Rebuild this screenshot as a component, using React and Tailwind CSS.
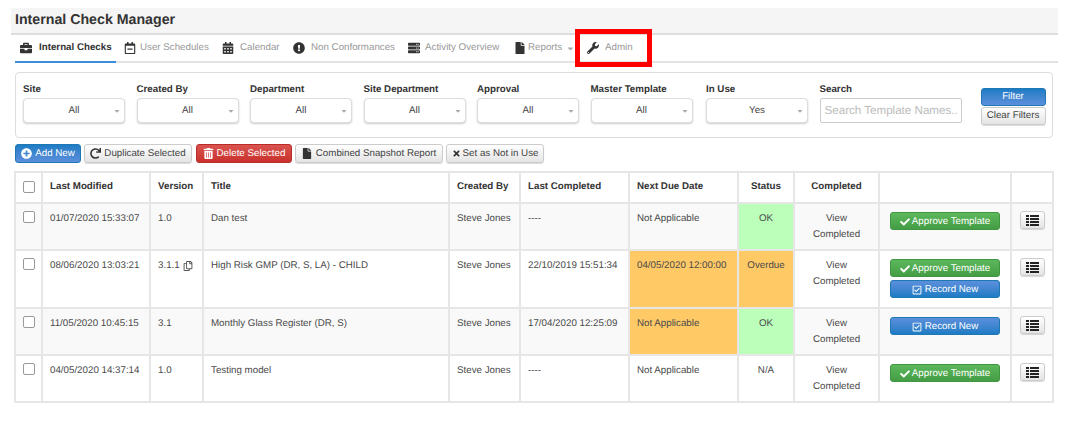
import React from "react";
import { FaBriefcase, FaRegCalendarMinus, FaCalendarAlt, FaExclamationCircle, FaServer, FaFile, FaWrench, FaPlusCircle, FaRedo, FaTrashAlt, FaTimes, FaRegCopy, FaCheck, FaRegCheckSquare, FaCaretDown } from "react-icons/fa";

const Tab = ({ icon: I, label, active, caret, w, gap }) => (
  <div className={`flex items-center h-full pl-[5px] ${w} ${active ? "text-[#333] font-bold" : "text-[#999]"}`}>
    <I className={`text-[#333] w-[12px] h-[12px] shrink-0 ${gap}`} />
    <span className="whitespace-nowrap">{label}</span>
    {caret && <FaCaretDown className="ml-[4px] w-[9px] h-[9px] text-[#aaa]" />}
  </div>
);

const Select = ({ label, value, cls }) => (
  <div className={`w-[102px] mr-[11.5px] shrink-0 ${cls || ""}`}>
    <div className="font-bold text-[#333] leading-[13px] pt-[1px] mb-[2px]">{label}</div>
    <div className="relative h-[25px] rounded-[4px] border border-[#ddd] bg-white shadow-[0_1px_2px_rgba(0,0,0,0.2)] flex items-center justify-center text-[#444]">
      {value}
      <FaCaretDown className="absolute right-[3px] top-[8px] w-[8px] h-[8px] text-[#aaa]" />
    </div>
  </div>
);

const grey = "h-[19px] rounded-[3px] border border-[#ccc] bg-gradient-to-b from-white to-[#e4e4e4] text-[#444] flex items-center justify-center whitespace-nowrap shadow-[0_1px_1px_rgba(0,0,0,0.15)]";

const Approve = () => (
  <div className="h-[18px] w-[110px] rounded-[3px] border border-[#419641] bg-gradient-to-b from-[#5cb85c] to-[#449d44] text-white flex items-center justify-center whitespace-nowrap pt-[1px]">
    <FaCheck className="w-[10px] h-[10px] mr-[2px]" />Approve Template
  </div>
);
const Record = () => (
  <div className="h-[18px] w-[110px] rounded-[3px] border border-[#1f78b4] bg-gradient-to-b from-[#5b8fdc] to-[#1a7cc4] text-white flex items-center justify-center whitespace-nowrap pt-[1px]">
    <FaRegCheckSquare className="w-[10px] h-[10px] mr-[3px]" />Record New
  </div>
);

const ListIcon = () => (
  <svg width="13" height="11" viewBox="0 0 13 11" className="text-[#222]" fill="currentColor">
    <rect x="0" y="0" width="3" height="2" />
    <rect x="4" y="0" width="9" height="2" />
    <rect x="0" y="3" width="3" height="2" />
    <rect x="4" y="3" width="9" height="2" />
    <rect x="0" y="6" width="3" height="2" />
    <rect x="4" y="6" width="9" height="2" />
    <rect x="0" y="9" width="3" height="2" />
    <rect x="4" y="9" width="9" height="2" />
  </svg>
);

const td = "border-2 border-[#e6e6e6] align-top px-[7px] pt-[8px] text-[#4a4a4a]";
const th = "border-2 border-[#e6e6e6] px-[7px] pb-[1px] font-bold text-[#333] text-left align-middle";

const Row = ({ bg, h, mod, ver, copy, title, last, due, dueCls, status, statusCls, children }) => (
  <tr className={bg} style={{ height: h }}>
    <td className={`${td} !pl-[7px] !pt-[7px]`}><div className="w-[12px] h-[12px] border border-[#999] rounded-[2px] bg-white" /></td>
    <td className={td}>{mod}</td>
    <td className={td}>
      <span className="flex items-center">{ver}{copy && <FaRegCopy className="ml-[3px] w-[10px] h-[10px] text-[#555]" />}</span>
    </td>
    <td className={td}>{title}</td>
    <td className={td}>Steve Jones</td>
    <td className={td}>{last}</td>
    <td className={`${td} ${dueCls || ""}`}>{due}</td>
    <td className={`${td} text-center ${statusCls || ""}`}>{status}</td>
    <td className={`${td} text-center leading-[16px] !pt-[7px]`}>View<br />Completed</td>
    <td className={`${td} !pt-[8px] !pl-[10px]`}><div className="flex flex-col gap-[3px]">{children}</div></td>
    <td className={`${td} !pt-[7px] !pl-[8px]`}>
      <div className="w-[25px] h-[18px] rounded-[3px] border border-[#ccc] bg-gradient-to-b from-white to-[#e4e4e4] flex items-center justify-center shadow-[0_1px_1px_rgba(0,0,0,0.15)]">
        <ListIcon />
      </div>
    </td>
  </tr>
);

export default function App() {
  return (
    <div className="relative w-[1069px] h-[430px] bg-white overflow-hidden text-[9.75px] leading-[14px] pt-[8px] [text-rendering:geometricPrecision]" style={{ fontFamily: '"Liberation Sans", Arial, sans-serif' }}>
      <div className="ml-[11px] w-[1047px] h-[27px] bg-[#f5f5f5] border-b-2 border-[#ddd] pl-[4px] flex items-center pb-[1px] text-[14.2px] font-bold text-[#333]">
        Internal Check Manager
      </div>
      <div className="relative ml-[15px] w-[1043px] h-[28px] flex items-center border-b-2 border-[#e3e3e3]">
        <div className="absolute left-0 -bottom-[2px] w-[101px] h-[2px] bg-[#3b8edb]" />
        <Tab icon={FaBriefcase} label="Internal Checks" active w="w-[104px]" gap="mr-[7px]" />
        <Tab icon={FaRegCalendarMinus} label="User Schedules" w="w-[98px]" gap="mr-[4px]" />
        <Tab icon={FaCalendarAlt} label="Calendar" w="w-[71px]" gap="mr-[6px]" />
        <Tab icon={FaExclamationCircle} label="Non Conformances" w="w-[115px]" gap="mr-[6px]" />
        <Tab icon={FaServer} label="Activity Overview" w="w-[106px]" gap="mr-[5px]" />
        <Tab icon={FaFile} label="Reports" caret w="w-[73px]" gap="mr-[2px]" />
        <Tab icon={FaWrench} label="Admin" w="w-[60px]" gap="mr-[6px]" />
      </div>
      {/* red highlight annotation */}
      <div className="absolute left-[575px] top-[29px] w-[77px] h-[38px] border-[5px] border-[#ff0000]" />

      <div className="ml-[15px] mt-[9px] w-[1038px] h-[66px] rounded-[4px] border border-[#ddd] flex pl-[7px] pt-[9px]">
        <Select label="Site" value="All" />
        <Select label="Created By" value="All" />
        <Select label="Department" value="All" />
        <Select label="Site Department" value="All" />
        <Select label="Approval" value="All" />
        <Select label="Master Template" value="All" />
        <Select label="In Use" value="Yes" cls="ml-[2px]" />
        <div className="w-[142px] shrink-0">
          <div className="font-bold text-[#333] leading-[13px] pt-[1px] mb-[2px]">Search</div>
          <div className="h-[25px] rounded-[2px] border border-[#ccc] flex items-center pl-[4px] text-[11.6px] text-[#bbb] whitespace-nowrap overflow-hidden">Search Template Names..</div>
        </div>
        <div className="ml-[19px] mt-[6px] w-[65px] flex flex-col gap-[1px]">
          <div className="h-[18px] rounded-[3px] border border-[#1f78b4] bg-gradient-to-b from-[#1a7cc4] to-[#5b8fdc] text-white flex items-center justify-center">Filter</div>
          <div className="h-[18px] rounded-[3px] border border-[#ccc] bg-gradient-to-b from-white to-[#e4e4e4] text-[#444] flex items-center justify-center shadow-[0_1px_1px_rgba(0,0,0,0.15)]">Clear Filters</div>
        </div>
      </div>

      <div className="ml-[15px] mt-[6px] h-[19px] flex gap-[3px]">
        <div className="h-[19px] w-[66px] rounded-[3px] border border-[#1f78b4] bg-gradient-to-b from-[#1a7cc4] to-[#5b8fdc] text-white flex items-center justify-center whitespace-nowrap">
          <FaPlusCircle className="w-[11px] h-[11px] mr-[3px]" />Add New
        </div>
        <div className={`${grey} w-[108px]`}><FaRedo className="w-[11px] h-[11px] mr-[3px] text-[#333]" />Duplicate Selected</div>
        <div className="h-[19px] w-[96px] ml-[1px] rounded-[3px] border border-[#b92c28] bg-gradient-to-b from-[#d9534f] to-[#c9302c] text-white flex items-center justify-center whitespace-nowrap">
          <FaTrashAlt className="w-[11px] h-[11px] mr-[3px]" />Delete Selected
        </div>
        <div className={`${grey} w-[148px]`}><FaFile className="w-[10px] h-[11px] mr-[4px] text-[#333]" />Combined Snapshot Report</div>
        <div className={`${grey} w-[98px]`}><FaTimes className="w-[9px] h-[9px] mr-[2px] text-[#333]" />Set as Not in Use</div>
      </div>

      <table className="ml-[14px] mt-[8px] w-[1038px] table-fixed border-collapse">
        <colgroup>
          <col className="w-[27px]" /><col className="w-[108px]" /><col className="w-[53px]" /><col className="w-[246px]" />
          <col className="w-[71px]" /><col className="w-[109px]" /><col className="w-[109px]" /><col className="w-[56px]" />
          <col className="w-[85px]" /><col className="w-[132px]" /><col className="w-[42px]" />
        </colgroup>
        <thead>
          <tr className="h-[31px]">
            <th className={th}><div className="w-[12px] h-[12px] border border-[#999] rounded-[2px] bg-white" /></th>
            <th className={th}>Last Modified</th>
            <th className={th}>Version</th>
            <th className={th}>Title</th>
            <th className={th}>Created By</th>
            <th className={th}>Last Completed</th>
            <th className={th}>Next Due Date</th>
            <th className={`${th} !text-center`}>Status</th>
            <th className={`${th} !text-center`}>Completed</th>
            <th className={th}></th>
            <th className={th}></th>
          </tr>
        </thead>
        <tbody>
          <Row bg="bg-[#f9f9f9]" h={47} mod="01/07/2020 15:33:07" ver="1.0" title="Dan test" last="----" due="Not Applicable" status="OK" statusCls="bg-[#bbffbb]"><Approve /></Row>
          <Row bg="bg-white" h={58} mod="08/06/2020 13:03:21" ver="3.1.1" copy title="High Risk GMP (DR, S, LA) - CHILD" last="22/10/2019 15:51:34" due="04/05/2020 12:00:00" dueCls="bg-[#ffc966]" status="Overdue" statusCls="bg-[#ffc966]"><Approve /><Record /></Row>
          <Row bg="bg-[#f9f9f9]" h={47} mod="11/05/2020 10:45:15" ver="3.1" title="Monthly Glass Register (DR, S)" last="17/04/2020 12:25:09" due="Not Applicable" dueCls="bg-[#ffc966]" status="OK" statusCls="bg-[#bbffbb]"><Record /></Row>
          <Row bg="bg-white" h={47} mod="04/05/2020 14:37:14" ver="1.0" title="Testing model" last="----" due="Not Applicable" status="N/A"><Approve /></Row>
        </tbody>
      </table>
    </div>
  );
}
